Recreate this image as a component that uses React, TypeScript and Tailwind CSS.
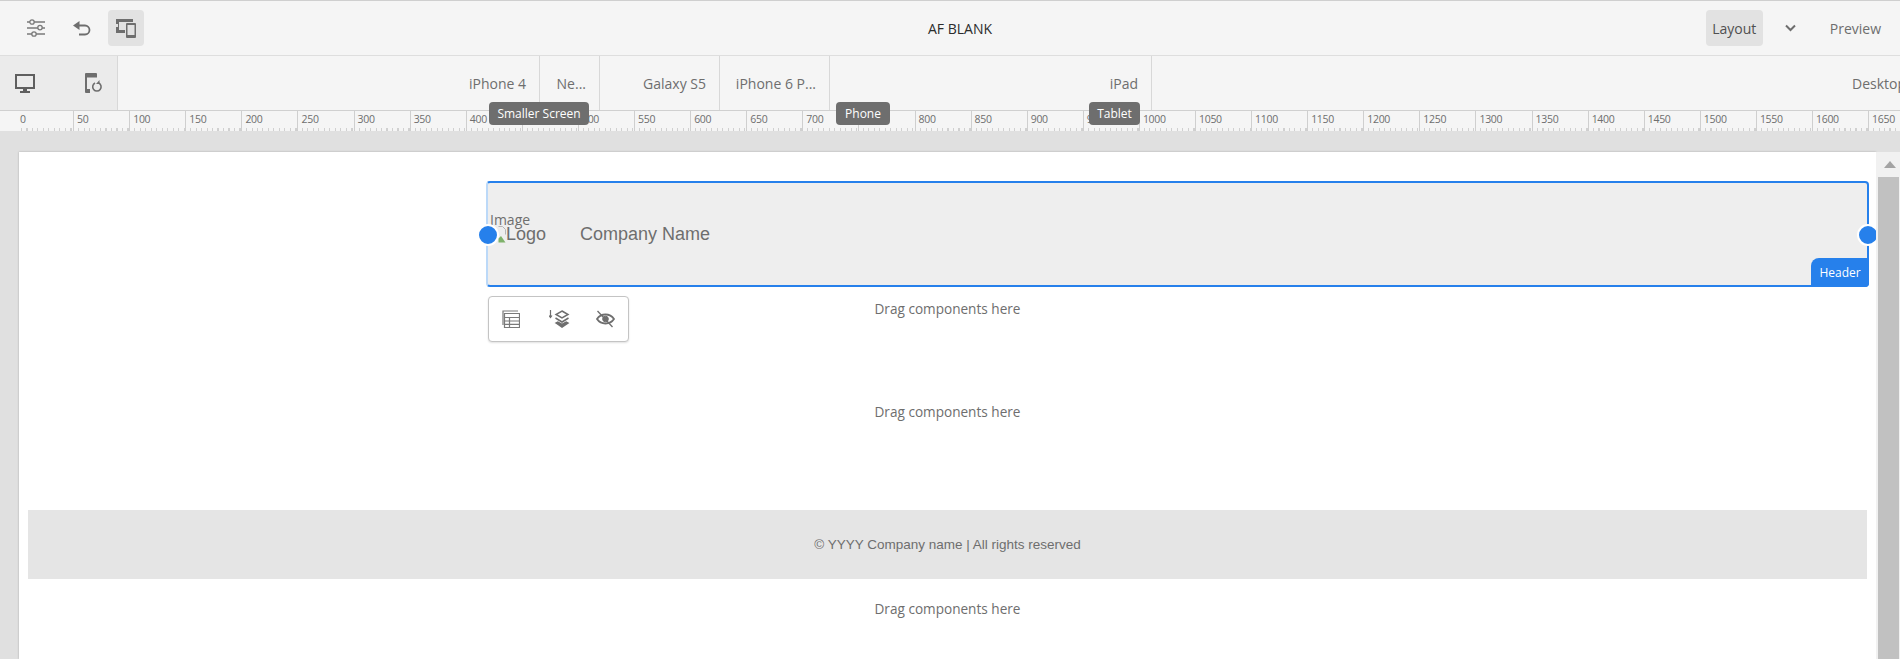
const rulerMarks = Array.from({ length: 34 }, (_, i) => i * 50)

const devices = [
  { label: 'iPhone 4', width: 'w-[422px]' },
  { label: 'Ne...', width: 'w-[60px]' },
  { label: 'Galaxy S5', width: 'w-[120px]' },
  { label: 'iPhone 6 P...', width: 'w-[110px]' },
  { label: 'iPad', width: 'w-[322px]' },
  { label: 'Desktop', width: 'w-[768px]' },
]

function SlidersIcon() {
  return (
    <svg width="20" height="18" viewBox="0 0 20 18" fill="none" stroke="#7a7a7a" strokeWidth="1.3">
      <path d="M1 3h18M1 9h18M1 15h18" />
      <circle cx="6" cy="3" r="2.2" fill="#f5f5f5" />
      <circle cx="14" cy="8.6" r="2.2" fill="#f5f5f5" />
      <circle cx="8" cy="15" r="2.2" fill="#f5f5f5" />
    </svg>
  )
}

function UndoIcon() {
  return (
    <svg width="19" height="16" viewBox="0 0 19 16" fill="none">
      <path d="M7 5.500h6a4.500 4.500 0 0 1 0 9H7" stroke="#6e6e6e" strokeWidth="1.800" />
      <path d="M7.500 1 1 5.500 7.500 10Z" fill="#6e6e6e" />
    </svg>
  )
}

function DevicesIcon() {
  return (
    <svg width="20" height="20" viewBox="0 0 20 20" fill="#6e6e6e">
      <path d="M0 1h17v3H3v8h6v3H0Z" />
      <path d="M0 6h2v3H0Z" fill="#e2e2e2" />
      <path fillRule="evenodd" d="M11 5h8a1 1 0 0 1 1 1v13a1 1 0 0 1-1 1h-8a1 1 0 0 1-1-1V6a1 1 0 0 1 1-1Zm.5 2V17h7V7Z" />
    </svg>
  )
}

function DesktopIcon() {
  return (
    <svg width="20" height="19" viewBox="0 0 20 19" fill="#5f5f5f">
      <path fillRule="evenodd" d="M0 0h20v15H12v2h3v2H5v-2h3v-2H0Zm2 2v11h16V2Z" />
    </svg>
  )
}

function PhoneRefreshIcon() {
  return (
    <svg width="18" height="20" viewBox="0 0 18 20" fill="none">
      <path d="M1 0h10a1 1 0 0 1 1 1v3.500H2V16h3v4H1a1 1 0 0 1-1-1V1a1 1 0 0 1 1-1Z" fill="#6e6e6e" />
      <path d="M10 10a4.200 4.200 0 1 0 3.800 0" stroke="#6e6e6e" strokeWidth="1.600" />
      <path d="M14.500 7v4H11Z" fill="#6e6e6e" />
    </svg>
  )
}

function ChevronIcon() {
  return (
    <svg width="11" height="8" viewBox="0 0 11 8" fill="none" stroke="#6e6e6e" strokeWidth="2">
      <path d="m1 1.500 4.500 4.500L10 1.500" />
    </svg>
  )
}

function BrokenImageIcon() {
  return (
    <svg width="8" height="17" viewBox="0 0 8 17" fill="none" className="shrink-0">
      <path d="M.5.500h4l3 3v5" stroke="#b5b5b5" />
      <path d="M.5 16.500v-4l2.500-2.500 4.500 6.500Z" fill="#7fb26b" />
    </svg>
  )
}

function TableIcon() {
  return (
    <svg width="18" height="18" viewBox="0 0 18 18" fill="none" stroke="#7a7a7a" strokeWidth="1.200">
      <path d="M1 15V1h15" />
      <path d="M2.500 3.500h15v14h-15ZM2.500 7.500h15M2.500 11h15M2.500 14.300h15M7.500 7.500v10" />
    </svg>
  )
}

function LayersIcon() {
  return (
    <svg width="21" height="19" viewBox="0 0 21 19" fill="none" stroke="#6e6e6e" strokeWidth="1.500">
      <path d="M1.500 0v7M0 5.500l1.500 2 1.500-2" strokeWidth="1.200" />
      <path d="m13 1 6 3.500-6 3.500-6-3.500Z" />
      <path d="m6.500 8 6.500 4 6.500-4" />
      <path d="m7 13 6 4 6-4-1.800-1-4.200 2.500L8.800 12Z" fill="#6e6e6e" />
    </svg>
  )
}

function EyeOffIcon() {
  return (
    <svg width="19" height="18" viewBox="0 0 19 18" fill="none" stroke="#6e6e6e">
      <path d="M1 9c2-3 5-4.500 8.500-4.500S16 6 18 9c-2 3-5 4.500-8.500 4.500S3 12 1 9Z" strokeWidth="1.800" />
      <circle cx="9.500" cy="9" r="2.800" fill="#6e6e6e" />
      <path d="m1.500 1 15 16" strokeWidth="1.300" />
    </svg>
  )
}

function Tooltip({ label, className }: { label: string; className: string }) {
  return (
    <div className={`absolute top-[102px] h-[23px] bg-[#6e6e6e] rounded-[4px] text-white text-[12px] flex items-center justify-center ${className}`}>
      {label}
    </div>
  )
}

function DropHint({ className }: { className: string }) {
  return (
    <div className={`flex items-center justify-center text-[13.6px] text-[#6e6e6e] ${className}`}>
      Drag components here
    </div>
  )
}

export default function App() {
  return (
    <div className="relative h-[659px] w-full overflow-hidden bg-[#e0e0e0] font-['Open_Sans',sans-serif]">
      {/* Top toolbar */}
      <div className="h-[56px] flex items-center bg-[#f5f5f5] border-t border-t-[#cfcfcf] border-b border-b-[#dedede]">
        <div className="flex items-center w-[760px] pl-[26px]">
          <SlidersIcon />
          <div className="ml-[26px]"><UndoIcon /></div>
          <div className="ml-[17px] w-[36px] h-[36px] rounded-[4px] bg-[#e2e2e2] flex items-center justify-center"><DevicesIcon /></div>
        </div>
        <div className="w-[400px] text-center text-[14px] text-[#2c2c2c]">AF BLANK</div>
        <div className="flex-1 flex items-center justify-end pr-[19px]">
          <div className="w-[57px] h-[36px] rounded-[4px] bg-[#e2e2e2] flex items-center justify-center text-[14px] text-[#505050]">Layout</div>
          <div className="ml-[22px]"><ChevronIcon /></div>
          <div className="ml-[34px] text-[14px] text-[#6e6e6e]">Preview</div>
        </div>
      </div>

      {/* Device widths */}
      <div className="h-[55px] flex bg-[#f5f5f5] border-b border-[#d0d0d0] overflow-hidden">
        <div className="w-[118px] shrink-0 flex items-center bg-[#ebebeb] border-r border-[#d8d8d8] pl-[15px]">
          <DesktopIcon />
          <div className="ml-[50px]"><PhoneRefreshIcon /></div>
        </div>
        {devices.map((device) => (
          <div key={device.label} className={`${device.width} shrink-0 flex items-center justify-end pr-[13px] border-r border-[#d8d8d8] text-[14px] text-[#6e6e6e]`}>
            {device.label}
          </div>
        ))}
      </div>

      {/* Ruler */}
      <div className="h-[20px] flex pl-[17px] bg-[#f5f5f5] overflow-hidden">
        {rulerMarks.map((mark, i) => (
          <div key={mark} className={`relative w-[56.1px] shrink-0 pl-[3px] text-[10.5px] tracking-[-0.3px] leading-[17px] text-[#6e6e6e] ${i > 0 ? 'border-l border-[#cfcfcf]' : ''}`}>
            {mark}
            <div className="absolute left-[4px] right-0 bottom-0 h-[3px] bg-[repeating-linear-gradient(90deg,#d0d0d0_0,#d0d0d0_1px,transparent_1px,transparent_5.500px)]" />
          </div>
        ))}
      </div>

      {/* Canvas */}
      <div className="flex h-[528px] pt-[21px] pl-[19px]">
        <div className="flex-1 min-w-0 h-full bg-white shadow-[0_0_2px_rgba(0,0,0,0.25)] overflow-hidden pt-[29px] pl-[9px] pr-[9px]">
          <div className="relative ml-[458px] mr-[-2px] h-[106px] bg-[#eeeeee] rounded-[4px] border-2 border-[#2680eb] border-l-[#bcd9f8]">
            <div className="absolute left-[2px] top-[27px] text-[14px] leading-[20px] text-[#6e6e6e]">Image</div>
            <div className="absolute inset-0 flex items-center pl-[10px] font-['Liberation_Sans',sans-serif] text-[18px] text-[#6e6e6e]">
              <BrokenImageIcon />
              <span>Logo</span>
              <span className="ml-[34px]">Company Name</span>
            </div>
            <div className="absolute left-[-11px] top-[41px] w-[22px] h-[22px] rounded-full bg-[#2680eb] border-2 border-white" />
            <div className="absolute right-[-12px] top-[41px] w-[22px] h-[22px] rounded-full bg-[#2680eb] border-2 border-white" />
            <div className="absolute right-[-2px] bottom-[-2px] w-[58px] h-[29px] rounded-tl-[8px] rounded-br-[4px] bg-[#2680eb] text-white text-[12px] flex items-center justify-center">Header</div>
            <div className="absolute left-0 top-[113px] w-[141px] h-[46px] bg-white rounded-[4px] border border-[#c4c4c4] shadow-[0_1px_2px_rgba(0,0,0,0.12)] flex items-center pl-[13px]">
              <TableIcon />
              <div className="ml-[29px]"><LayersIcon /></div>
              <div className="ml-[26px]"><EyeOffIcon /></div>
            </div>
          </div>
          <DropHint className="h-[45px]" />
          <DropHint className="h-[44px] mt-[58px]" />
          <div className="mt-[76px] h-[69px] pt-[2px] bg-[#e5e5e5] flex items-center justify-center font-['Liberation_Sans',sans-serif] text-[13.5px] text-[#6e6e6e]">
            © YYYY Company name | All rights reserved
          </div>
          <DropHint className="h-[60px]" />
        </div>

        {/* Scrollbar */}
        <div className="relative z-10 w-[24px] shrink-0 h-full flex flex-col bg-[#f1f1f1]">
          <div className="h-[25px] flex items-center justify-center pl-[3px]">
            <div className="w-0 h-0 border-x-[6px] border-x-transparent border-b-[7px] border-b-[#a3a3a3]" />
          </div>
          <div className="flex-1 ml-[2px] mr-[1px] bg-[#c1c1c1]" />
        </div>
      </div>

      <Tooltip label="Smaller Screen" className="left-[489px] w-[100px]" />
      <Tooltip label="Phone" className="left-[836px] w-[54px]" />
      <Tooltip label="Tablet" className="left-[1089px] w-[51px]" />
    </div>
  )
}
